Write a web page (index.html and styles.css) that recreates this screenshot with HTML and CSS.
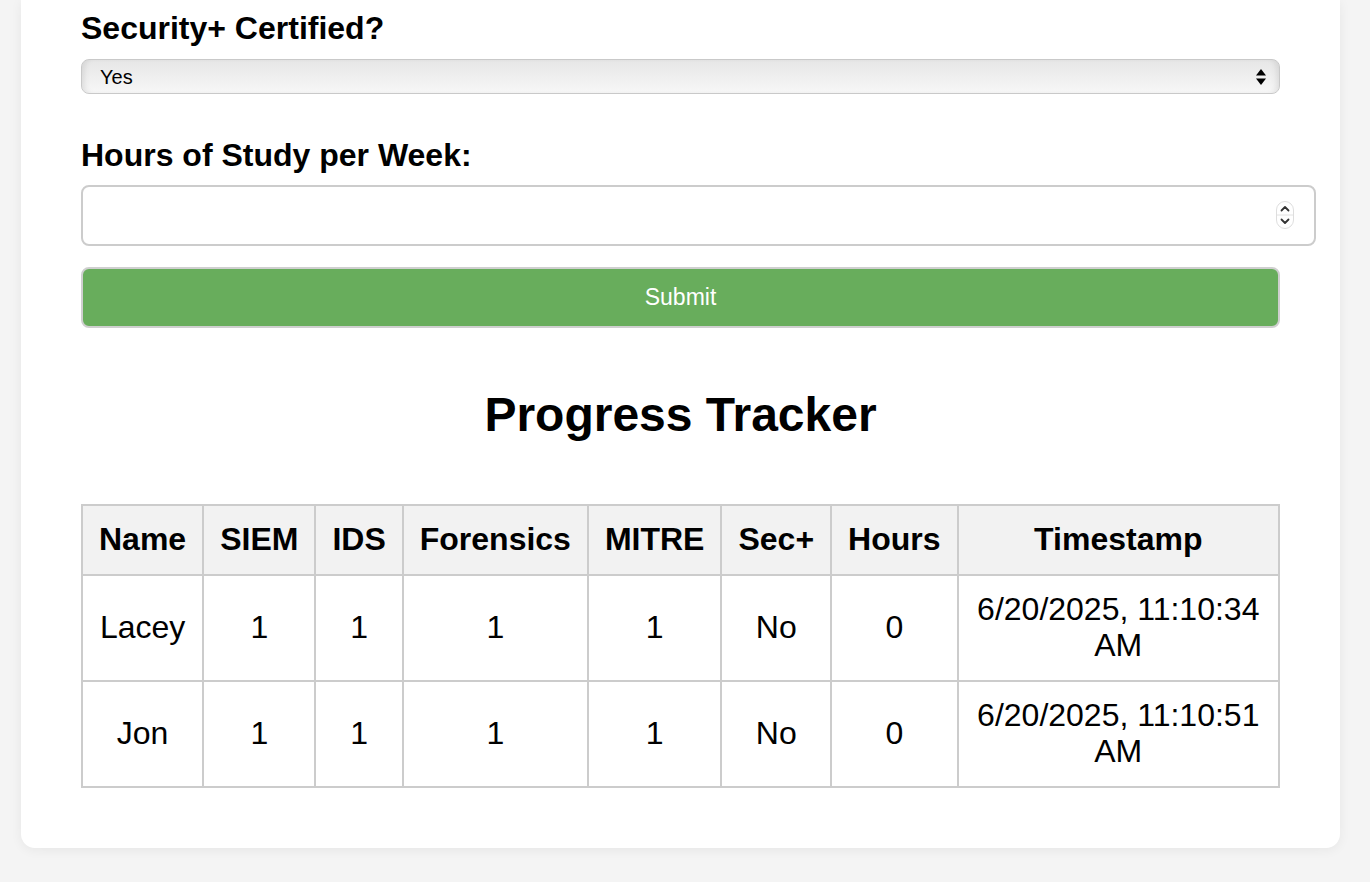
FILE: index.html
```html
<!DOCTYPE html>
<html lang="en">
<head>
<meta charset="utf-8">
<title>Progress Tracker</title>
<link rel="stylesheet" href="styles.css">
</head>
<body>
<main class="card">
  <form class="form">
    <label class="label label-first" for="secplus">Security+ Certified?</label>
    <div class="select">
      <span class="select-value">Yes</span>
      <svg class="select-arrows" width="12" height="18" viewBox="0 0 12 18" aria-hidden="true">
        <path d="M6 1 L11 7.5 H1 Z" fill="#000"/>
        <path d="M6 17 L11 10.5 H1 Z" fill="#000"/>
      </svg>
    </div>

    <label class="label label-second" for="hours">Hours of Study per Week:</label>
    <div class="number-field">
      <input class="number-input" id="hours" type="text" value="">
      <span class="spinner" aria-hidden="true">
        <svg width="18" height="28" viewBox="0 0 18 28">
          <rect x="0.5" y="0.5" width="17" height="27" rx="8.5" fill="#fff" stroke="#dedede"/>
          <line x1="1" y1="14" x2="17" y2="14" stroke="#e2e2e2"/>
          <path d="M5.5 9.5 L9 6 L12.5 9.5" fill="none" stroke="#333" stroke-width="1.8" stroke-linecap="round" stroke-linejoin="round"/>
          <path d="M5.5 18.5 L9 22 L12.5 18.5" fill="none" stroke="#333" stroke-width="1.8" stroke-linecap="round" stroke-linejoin="round"/>
        </svg>
      </span>
    </div>

    <button class="submit" type="button">Submit</button>
  </form>

  <h2 class="title">Progress Tracker</h2>

  <table class="tracker">
    <thead>
      <tr>
        <th>Name</th><th>SIEM</th><th>IDS</th><th>Forensics</th><th>MITRE</th><th>Sec+</th><th>Hours</th><th>Timestamp</th>
      </tr>
    </thead>
    <tbody>
      <tr>
        <td>Lacey</td><td>1</td><td>1</td><td>1</td><td>1</td><td>No</td><td>0</td><td>6/20/2025, 11:10:34 AM</td>
      </tr>
      <tr>
        <td>Jon</td><td>1</td><td>1</td><td>1</td><td>1</td><td>No</td><td>0</td><td>6/20/2025, 11:10:51 AM</td>
      </tr>
    </tbody>
  </table>
</main>
</body>
</html>
```
FILE: styles.css
```css
html, body {
  margin: 0;
  padding: 0;
  background: #f4f4f4;
  font-family: "Liberation Sans", Arial, Helvetica, sans-serif;
  color: #000;
}

.card {
  box-sizing: border-box;
  width: 1319px;
  margin: 0 0 34px 21px;
  padding: 10px 60px 60px 60px;
  background: #fff;
  border-radius: 0 0 14px 14px;
  box-shadow: 0 2px 12px rgba(0, 0, 0, 0.06);
}

.form {
  display: flex;
  flex-direction: column;
}

.label {
  display: block;
  font-size: 32px;
  line-height: 37px;
  font-weight: bold;
}

.label-first { margin-bottom: 12px; }
.label-second { margin-top: 43px; margin-bottom: 11px; }

.select {
  box-sizing: border-box;
  height: 35px;
  display: flex;
  align-items: center;
  justify-content: space-between;
  padding: 0 12px 0 18px;
  border: 1px solid #c9c9c9;
  border-radius: 8px;
  background: linear-gradient(to bottom, #e6e6e6 0%, #eeeeee 45%, #f7f7f7 100%);
  box-shadow: inset 6px 0 6px -4px rgba(0,0,0,0.10), inset -6px 0 6px -4px rgba(0,0,0,0.10);
}

.select-value {
  font-size: 20px;
  line-height: 24px;
}

.number-field {
  position: relative;
  width: 1235px;
}

.number-input {
  box-sizing: border-box;
  display: block;
  width: 1235px;
  height: 61px;
  padding: 0 16px;
  border: 2px solid #cccccc;
  border-radius: 8px;
  background: #fff;
  font-family: inherit;
  font-size: 24px;
  outline: none;
}

.spinner {
  position: absolute;
  right: 22px;
  top: 16px;
  width: 18px;
  height: 28px;
  display: block;
}

.spinner svg { display: block; }

.submit {
  box-sizing: border-box;
  margin-top: 21px;
  height: 61px;
  width: 100%;
  border: 2px solid #cfcfcf;
  border-radius: 8px;
  background: #68ad5c;
  color: #fff;
  font-family: inherit;
  font-size: 23px;
  padding: 0;
}

.title {
  margin: 59px 0 62px 0;
  text-align: center;
  font-size: 48px;
  line-height: 55px;
  font-weight: bold;
}

.tracker {
  width: 100%;
  border-collapse: collapse;
  font-size: 32px;
  line-height: 36px;
}

.tracker th,
.tracker td {
  border: 2px solid #cccccc;
  padding: 15px 16px 17px 16px;
  text-align: center;
}

.tracker th {
  background: #f2f2f2;
  font-weight: bold;
}
```
